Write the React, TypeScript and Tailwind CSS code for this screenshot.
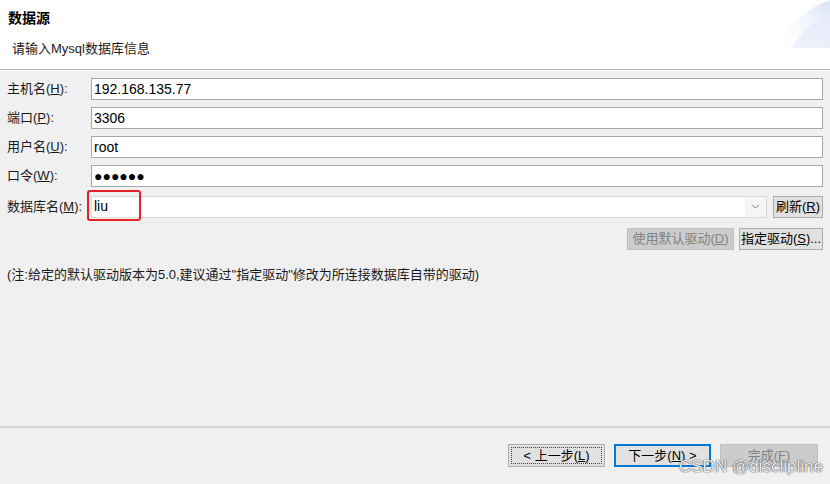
import { ChevronDown } from "lucide-react";

const font = "font-['Liberation_Sans','Noto_Sans_CJK_SC',sans-serif]";

function Field({ label, u, rest, value, password }: { label: string; u: string; rest: string; value: string; password?: boolean }) {
  return (
    <div className="flex items-center h-[22px]">
      <div className="w-[84px] text-[13px] text-[#1a1a1a]">
        {label}(<span className="underline">{u}</span>){rest}
      </div>
      <div className="flex-1 h-[22px] bg-white border border-[#a8a8a8] flex items-center px-[2px] text-[14px] text-black">
        {password ? <span className="text-[14px]">●●●●●●</span> : value}
      </div>
    </div>
  );
}

export default function App() {
  return (
    <div className={`${font} relative w-[830px] h-[484px] bg-[#f0f0f0] flex flex-col overflow-hidden`}>
      {/* header */}
      <div className="relative h-[70px] bg-white border-b border-[#b4b4b4] shrink-0">
        <div className="pl-[8px] pt-[8px] text-[14px] font-bold text-black">数据源</div>
        <div className="pl-[12px] pt-[10px] text-[13px] text-[#1a1a1a]">请输入Mysql数据库信息</div>
        <svg className="absolute right-0 top-0" width="58" height="48" viewBox="0 0 58 48">
          <defs>
            <linearGradient id="g1" x1="0" y1="1" x2="1" y2="0">
              <stop offset="0" stopColor="#ffffff" stopOpacity="0" />
              <stop offset="1" stopColor="#d8e1f6" />
            </linearGradient>
          </defs>
          <path d="M0 48 C14 30 30 10 58 0 L58 48 Z" fill="url(#g1)" />
          <path d="M20 48 C28 32 42 20 58 16 L58 48 Z" fill="#e3e9f8" opacity="0.6" />
        </svg>
      </div>
      <div className="h-px bg-white shrink-0" />

      {/* form */}
      <div className="flex flex-col gap-[7px] pl-[7px] pr-[7px] pt-[7px]">
        <Field label="主机名" u="H" rest=":" value="192.168.135.77" />
        <Field label="端口" u="P" rest=":" value="3306" />
        <Field label="用户名" u="U" rest=":" value="root" />
        <Field label="口令" u="W" rest=":" value="" password />
        <div className="flex items-center h-[23px] mt-[1px]">
          <div className="w-[84px] text-[13px] text-[#1a1a1a]">
            数据库名(<span className="underline">M</span>):
          </div>
          <div className="relative flex-1 h-[22px] bg-white border border-[#d9d9d9] flex items-center">
            <span className="pl-[2px] text-[14px] text-black flex-1">liu</span>
            <div className="w-[21px] h-full bg-[#f5f5f5] flex items-center justify-center">
              <ChevronDown size={13} strokeWidth={1.5} className="text-[#555]" />
            </div>
            <div className="absolute left-[-5px] top-[-7px] w-[54px] h-[31px] border-2 border-[#e8202a] rounded-[3px]" />
          </div>
          <button className="ml-[6px] w-[50px] h-[22px] bg-[#e1e1e1] border border-[#adadad] text-[13px] text-black">
            刷新(<span className="underline">R</span>)
          </button>
        </div>
        <div className="flex justify-end gap-[5px] mt-[3px]">
          <button className="w-[107px] h-[22px] bg-[#cccccc] border border-[#bfbfbf] text-[13px] text-[#838383]">
            使用默认驱动(<span className="underline">D</span>)
          </button>
          <button className="w-[84px] h-[22px] bg-[#e1e1e1] border border-[#adadad] text-[13px] text-black">
            指定驱动(<span className="underline">S</span>)...
          </button>
        </div>
        <div className="mt-[8px] text-[13px] text-[#1a1a1a]">
          (注:给定的默认驱动版本为5.0,建议通过"指定驱动"修改为所连接数据库自带的驱动)
        </div>
      </div>

      <div className="flex-1" />

      {/* footer */}
      <div className="h-[2px] bg-[#d4d4d4] shrink-0" />
      <div className="h-[56px] shrink-0 flex justify-end items-start pt-[16px] pr-[12px] gap-[9px]">
        <button className="w-[97px] h-[23px] bg-[#e1e1e1] border border-[#adadad] p-[2px] text-[13px] text-black">
          <div className="w-full h-full border border-dotted border-[#444] flex items-center justify-center">
            &lt; 上一步(<span className="underline">L</span>)
          </div>
        </button>
        <button className="w-[97px] h-[23px] bg-[#e1e1e1] border-2 border-[#0078d7] text-[13px] text-black flex items-center justify-center">
          下一步(<span className="underline">N</span>) &gt;
        </button>
        <button className="w-[98px] h-[23px] bg-[#cccccc] border border-[#bfbfbf] text-[13px] text-[#838383] flex items-center justify-center">
          完成(<span className="underline">F</span>)
        </button>
      </div>

      <div className="absolute left-[679px] top-[454px] text-[17px] text-white/90 font-['Liberation_Sans',sans-serif] [text-shadow:0_0_1px_#555,0_0_1px_#555,0_0_1px_#777]">
        CSDN @disclipline
      </div>
    </div>
  );
}
